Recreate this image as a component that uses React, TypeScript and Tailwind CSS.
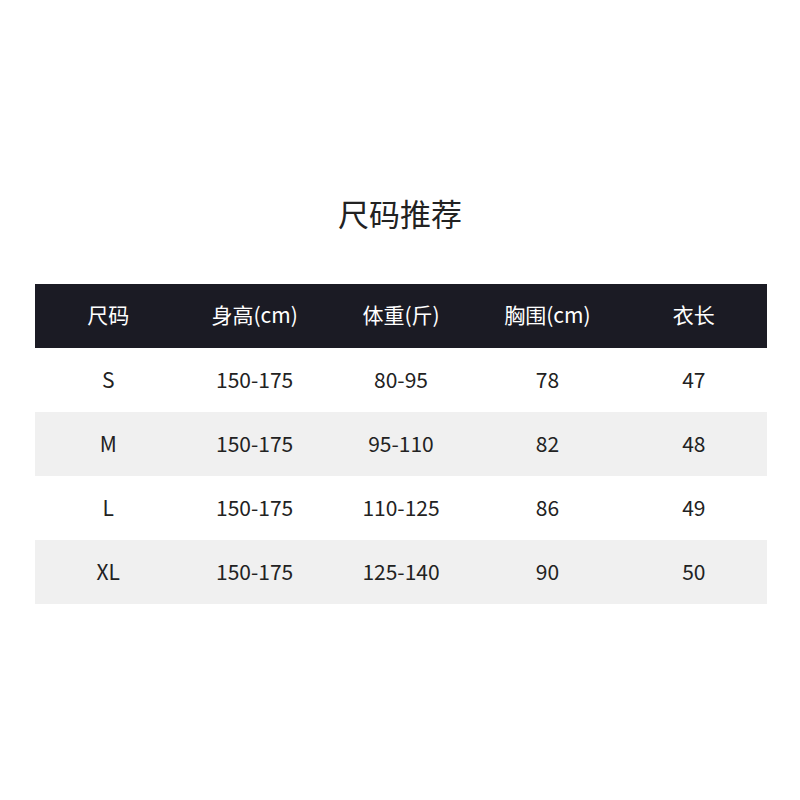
import React from "react";

const headers = ["尺码", "身高(cm)", "体重(斤)", "胸围(cm)", "衣长"];
const rows = [
  ["S", "150-175", "80-95", "78", "47"],
  ["M", "150-175", "95-110", "82", "48"],
  ["L", "150-175", "110-125", "86", "49"],
  ["XL", "150-175", "125-140", "90", "50"],
];

export default function App() {
  return (
    <div
      className="w-[800px] h-[800px] bg-white flex flex-col items-center text-[#222]"
      style={{ fontFamily: '"Noto Sans CJK SC", "Noto Sans", sans-serif' }}
    >
      <h1 className="mt-[192px] text-[31px] leading-[42px] font-normal">尺码推荐</h1>
      <div className="mt-[50px] w-[732px] ml-[2px]">
        <div className="grid grid-cols-5 h-[64px] bg-[#1b1b24] text-white">
          {headers.map((h) => (
            <div key={h} className="flex items-center justify-center text-[21px] pb-[2px]">
              {h}
            </div>
          ))}
        </div>
        {rows.map((r, i) => (
          <div
            key={i}
            className={`grid grid-cols-5 h-[64px] ${i % 2 === 1 ? "bg-[#f0f0f0]" : "bg-white"}`}
          >
            {r.map((c, j) => (
              <div key={j} className="flex items-center justify-center text-[21px]">
                {c}
              </div>
            ))}
          </div>
        ))}
      </div>
    </div>
  );
}
